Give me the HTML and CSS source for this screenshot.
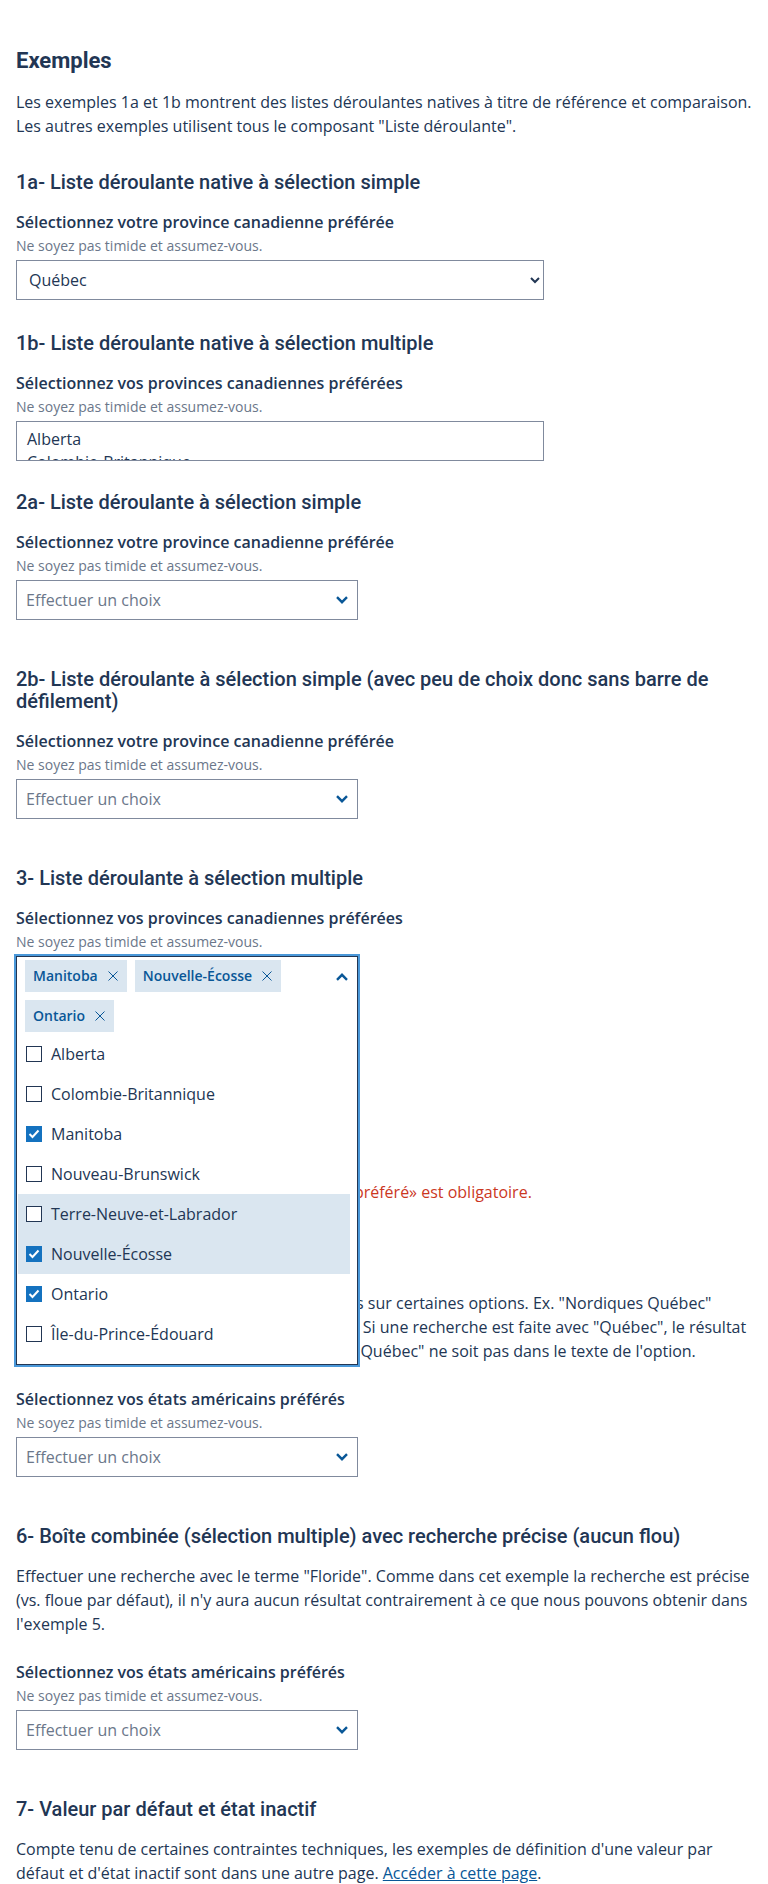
FILE: index.html
```html
<!DOCTYPE html>
<html lang="fr">
<head>
<meta charset="utf-8">
<title>Liste déroulante – Exemples</title>
<link rel="stylesheet" href="styles.css">
</head>
<body>
<main class="page">
  <h2 class="page-title">Exemples</h2>
  <p class="text intro">Les exemples 1a et 1b montrent des listes déroulantes natives à titre de référence et comparaison. Les autres exemples utilisent tous le composant "Liste déroulante".</p>

  <section class="example">
    <h3 class="example-title">1a- Liste déroulante native à sélection simple</h3>
    <label class="field-label" for="native-single">Sélectionnez votre province canadienne préférée</label>
    <div class="field-hint">Ne soyez pas timide et assumez-vous.</div>
    <select id="native-single" class="native-select">
      <option>Alberta</option>
      <option>Colombie-Britannique</option>
      <option>Manitoba</option>
      <option>Nouveau-Brunswick</option>
      <option>Ontario</option>
      <option selected>Québec</option>
      <option>Saskatchewan</option>
    </select>
  </section>

  <section class="example example--tight">
    <h3 class="example-title">1b- Liste déroulante native à sélection multiple</h3>
    <label class="field-label" for="native-multiple">Sélectionnez vos provinces canadiennes préférées</label>
    <div class="field-hint">Ne soyez pas timide et assumez-vous.</div>
    <select id="native-multiple" class="native-multiple" multiple>
      <option>Alberta</option>
      <option>Colombie-Britannique</option>
      <option>Manitoba</option>
      <option>Nouveau-Brunswick</option>
      <option>Terre-Neuve-et-Labrador</option>
      <option>Nouvelle-Écosse</option>
      <option>Ontario</option>
      <option>Île-du-Prince-Édouard</option>
      <option>Québec</option>
      <option>Saskatchewan</option>
    </select>
  </section>

  <section class="example example--custom">
    <h3 class="example-title">2a- Liste déroulante à sélection simple</h3>
    <div class="field-label">Sélectionnez votre province canadienne préférée</div>
    <div class="field-hint">Ne soyez pas timide et assumez-vous.</div>
    <div class="dropdown">
      <button class="dropdown-toggle" type="button">
        <span class="placeholder">Effectuer un choix</span>
        <svg class="chevron" width="12" height="8" viewBox="0 0 12 8" aria-hidden="true"><path d="M1 1.2 L6 6.2 L11 1.2"/></svg>
      </button>
    </div>
  </section>

  <section class="example example--custom">
    <h3 class="example-title">2b- Liste déroulante à sélection simple (avec peu de choix donc sans barre de défilement)</h3>
    <div class="field-label">Sélectionnez votre province canadienne préférée</div>
    <div class="field-hint">Ne soyez pas timide et assumez-vous.</div>
    <div class="dropdown">
      <button class="dropdown-toggle" type="button">
        <span class="placeholder">Effectuer un choix</span>
        <svg class="chevron" width="12" height="8" viewBox="0 0 12 8" aria-hidden="true"><path d="M1 1.2 L6 6.2 L11 1.2"/></svg>
      </button>
    </div>
  </section>

  <section class="example example--custom example--open">
    <h3 class="example-title">3- Liste déroulante à sélection multiple</h3>
    <div class="field-label">Sélectionnez vos provinces canadiennes préférées</div>
    <div class="field-hint">Ne soyez pas timide et assumez-vous.</div>
    <div class="dropdown">
      <div class="dropdown-panel">
        <div class="dropdown-head">
          <ul class="tags">
            <li class="tag">Manitoba<svg class="tag-close" width="10" height="10" viewBox="0 0 10 10" aria-hidden="true"><path d="M0.5 0.5 L9.5 9.5 M9.5 0.5 L0.5 9.5"/></svg></li>
            <li class="tag">Nouvelle-Écosse<svg class="tag-close" width="10" height="10" viewBox="0 0 10 10" aria-hidden="true"><path d="M0.5 0.5 L9.5 9.5 M9.5 0.5 L0.5 9.5"/></svg></li>
            <li class="tag">Ontario<svg class="tag-close" width="10" height="10" viewBox="0 0 10 10" aria-hidden="true"><path d="M0.5 0.5 L9.5 9.5 M9.5 0.5 L0.5 9.5"/></svg></li>
          </ul>
          <svg class="chevron chevron--up" width="12" height="8" viewBox="0 0 12 8" aria-hidden="true"><path d="M1 6.8 L6 1.8 L11 6.8"/></svg>
        </div>
        <ul class="options">
          <li class="option"><span class="checkbox"></span>Alberta</li>
          <li class="option"><span class="checkbox"></span>Colombie-Britannique</li>
          <li class="option"><span class="checkbox checkbox--checked"><svg width="12" height="10" viewBox="0 0 12 10" aria-hidden="true"><path d="M1.5 5 L4.5 8 L10.5 1.5"/></svg></span>Manitoba</li>
          <li class="option"><span class="checkbox"></span>Nouveau-Brunswick</li>
          <li class="option option--active"><span class="checkbox"></span>Terre-Neuve-et-Labrador</li>
          <li class="option option--active"><span class="checkbox checkbox--checked"><svg width="12" height="10" viewBox="0 0 12 10" aria-hidden="true"><path d="M1.5 5 L4.5 8 L10.5 1.5"/></svg></span>Nouvelle-Écosse</li>
          <li class="option"><span class="checkbox checkbox--checked"><svg width="12" height="10" viewBox="0 0 12 10" aria-hidden="true"><path d="M1.5 5 L4.5 8 L10.5 1.5"/></svg></span>Ontario</li>
          <li class="option"><span class="checkbox"></span>Île-du-Prince-Édouard</li>
        </ul>
      </div>
    </div>
  </section>

  <section class="example example--custom">
    <h3 class="example-title">4- Champ obligatoire</h3>
    <div class="field-label">Sélectionnez votre sport préféré</div>
    <div class="field-hint">Ne soyez pas timide.</div>
    <div class="dropdown">
      <button class="dropdown-toggle" type="button">
        <span class="placeholder">Effectuer un choix</span>
        <svg class="chevron" width="12" height="8" viewBox="0 0 12 8" aria-hidden="true"><path d="M1 1.2 L6 6.2 L11 1.2"/></svg>
      </button>
    </div>
    <p class="error-message">Le champ «Sélectionnez votre sport d'équipe préféré» est obligatoire.</p>
  </section>

  <section class="example example--custom">
    <h3 class="example-title">5- Boîte combinée</h3>
    <p class="text description">Des mots-clefs additionnels ont ici été rajoutés sur certaines options. Ex. "Nordiques Québec"<br>pour la seule option "Avalanche du Colorado". Si une recherche est faite avec "Québec", le résultat<br>"Avalanche du Colorado" est trouvé bien que "Québec" ne soit pas dans le texte de l'option.</p>
    <div class="field-label">Sélectionnez vos états américains préférés</div>
    <div class="field-hint">Ne soyez pas timide et assumez-vous.</div>
    <div class="dropdown">
      <button class="dropdown-toggle" type="button">
        <span class="placeholder">Effectuer un choix</span>
        <svg class="chevron" width="12" height="8" viewBox="0 0 12 8" aria-hidden="true"><path d="M1 1.2 L6 6.2 L11 1.2"/></svg>
      </button>
    </div>
  </section>

  <section class="example example--custom">
    <h3 class="example-title">6- Boîte combinée (sélection multiple) avec recherche précise (aucun flou)</h3>
    <p class="text description">Effectuer une recherche avec le terme "Floride". Comme dans cet exemple la recherche est précise (vs. floue par défaut), il n'y aura aucun résultat contrairement à ce que nous pouvons obtenir dans l'exemple 5.</p>
    <div class="field-label">Sélectionnez vos états américains préférés</div>
    <div class="field-hint">Ne soyez pas timide et assumez-vous.</div>
    <div class="dropdown">
      <button class="dropdown-toggle" type="button">
        <span class="placeholder">Effectuer un choix</span>
        <svg class="chevron" width="12" height="8" viewBox="0 0 12 8" aria-hidden="true"><path d="M1 1.2 L6 6.2 L11 1.2"/></svg>
      </button>
    </div>
  </section>

  <section class="example">
    <h3 class="example-title">7- Valeur par défaut et état inactif</h3>
    <p class="text">Compte tenu de certaines contraintes techniques, les exemples de définition d'une valeur par défaut et d'état inactif sont dans une autre page. <a class="link" href="#">Accéder à cette page</a>.</p>
  </section>
</main>
</body>
</html>
```

FILE: styles.css
```css
* { box-sizing: border-box; }

html, body {
  margin: 0;
  padding: 0;
  background: #ffffff;
}

body {
  font-family: "Open Sans", "Noto Sans", sans-serif;
  font-size: 16px;
  line-height: 24px;
  color: #223654;
}

.page {
  padding: 48px 8px 0 16px;
}

.page-title {
  margin: 0 0 16px;
  font-family: Roboto, "Noto Sans", sans-serif;
  font-weight: 700;
  font-size: 22px;
  line-height: 26px;
  color: #223654;
}

.text {
  margin: 0;
}

.intro {
  margin-bottom: 33px;
}

.example {
  margin-bottom: 32px;
}

.example--tight {
  margin-bottom: 30px;
}

.example--custom {
  margin-bottom: 48px;
}

.example--open {
  margin-bottom: 51px;
}

.example-title {
  margin: 0 0 17px;
  font-family: Roboto, "Noto Sans", sans-serif;
  font-weight: 500;
  font-size: 20px;
  line-height: 22px;
  color: #223654;
}

.description {
  margin-bottom: 24px;
}

.field-label {
  display: block;
  font-weight: 600;
  font-size: 16px;
  line-height: 24px;
}

.field-hint {
  margin: 1px 0 4px;
  font-size: 14px;
  line-height: 21px;
  color: #6b778a;
}

.native-select {
  display: block;
  width: 528px;
  height: 40px;
  padding: 0 8px;
  border: 1px solid #808a9d;
  border-radius: 0;
  background: #ffffff;
  font-family: "Open Sans", "Noto Sans", sans-serif;
  font-size: 16px;
  color: #223654;
}

.native-multiple {
  display: block;
  width: 528px;
  height: 40px;
  padding: 6px 8px;
  border: 1px solid #808a9d;
  border-radius: 0;
  background: #ffffff;
  font-family: "Open Sans", "Noto Sans", sans-serif;
  font-size: 16px;
  color: #223654;
  overflow: hidden;
  scrollbar-width: none;
}

.dropdown {
  position: relative;
  width: 342px;
  height: 40px;
}

.dropdown-toggle {
  display: flex;
  align-items: center;
  justify-content: space-between;
  width: 100%;
  height: 40px;
  margin: 0;
  padding: 0 9px;
  border: 1px solid #808a9d;
  border-radius: 0;
  background: #ffffff;
  font-family: "Open Sans", "Noto Sans", sans-serif;
  font-size: 16px;
  line-height: 24px;
  text-align: left;
}

.placeholder {
  color: #6b778a;
}

.chevron {
  flex: none;
  fill: none;
  stroke: #095797;
  stroke-width: 2.4;
}

.dropdown-panel {
  position: absolute;
  top: 0;
  left: 0;
  z-index: 5;
  width: 342px;
  background: #ffffff;
  border: 1px solid #223654;
  outline: 2px solid #4a98d9;
  padding-bottom: 10px;
}

.dropdown-head {
  display: flex;
  align-items: flex-start;
  justify-content: space-between;
  padding: 3px 9px 0 8px;
}

.chevron--up {
  margin-top: 13px;
}

.tags {
  display: flex;
  flex-wrap: wrap;
  gap: 8px;
  margin: 0;
  padding: 0;
  list-style: none;
}

.tag {
  display: flex;
  align-items: center;
  gap: 10px;
  height: 32px;
  padding: 0 9px 0 8px;
  background: #dae6f0;
  color: #095797;
  font-size: 14px;
  font-weight: 600;
  line-height: 20px;
}

.tag-close {
  fill: none;
  stroke: #095797;
  stroke-width: 1;
}

.options {
  margin: 2px 0 0;
  padding: 0 7px 0 1px;
  list-style: none;
}

.option {
  display: flex;
  align-items: center;
  gap: 9px;
  height: 40px;
  padding-left: 8px;
  font-size: 16px;
}

.option--active {
  background: #dae6f0;
}

.checkbox {
  flex: none;
  display: flex;
  align-items: center;
  justify-content: center;
  width: 16px;
  height: 16px;
  border: 1px solid #223654;
  background: #ffffff;
}

.checkbox--checked {
  border-color: #1472bf;
  background: #1472bf;
}

.checkbox svg {
  fill: none;
  stroke: #ffffff;
  stroke-width: 2;
}

.error-message {
  margin: 4px 0 0;
  color: #cb381f;
}

.link {
  color: #095797;
  text-decoration: underline;
}
```
